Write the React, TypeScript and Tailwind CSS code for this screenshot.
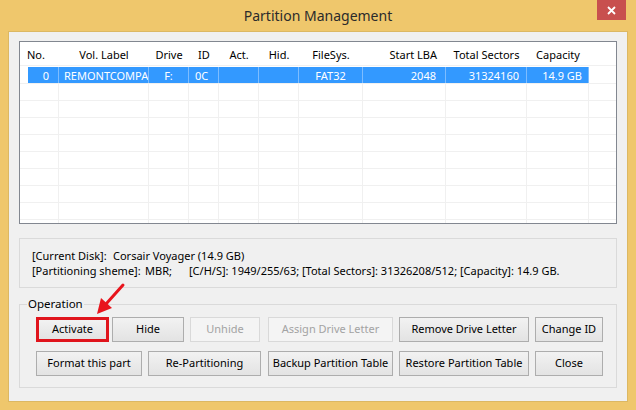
import React from "react";

const cols = [
  { w: 39, h: "No.", ha: "text-left pl-[7px]" },
  { w: 90, h: "Vol. Label", ha: "text-center" },
  { w: 40, h: "Drive", ha: "text-center" },
  { w: 30, h: "ID", ha: "text-center" },
  { w: 40, h: "Act.", ha: "text-center" },
  { w: 40, h: "Hid.", ha: "text-center" },
  { w: 64, h: "FileSys.", ha: "text-center" },
  { w: 83, h: "Start LBA", ha: "text-right pr-[9px]" },
  { w: 81, h: "Total Sectors", ha: "text-center" },
  { w: 62, h: "Capacity", ha: "text-center" },
];

const row0 = [
  { t: "0", a: "text-center pl-[6px]" },
  { t: "REMONTCOMPA", a: "text-left pl-[5px]" },
  { t: "F:", a: "text-center" },
  { t: "0C", a: "text-left pl-[6px]" },
  { t: "", a: "" },
  { t: "", a: "" },
  { t: "FAT32", a: "text-center" },
  { t: "2048", a: "text-right pr-[9px]" },
  { t: "31324160", a: "text-right pr-[7px]" },
  { t: "14.9 GB", a: "text-right pr-[6px]" },
];

function Btn({
  label,
  w,
  ml = 0,
  disabled,
  marked,
}: {
  label: string;
  w: number;
  ml?: number;
  disabled?: boolean;
  marked?: boolean;
}) {
  return (
    <div
      style={{ width: w, marginLeft: ml }}
      className={
        "h-[25px] flex items-center justify-center whitespace-nowrap text-[11px] " +
        (marked
          ? "border-[3px] border-[#e0141c] bg-gradient-to-b from-[#f2f2f2] to-[#e3e3e3] text-black"
          : disabled
          ? "border border-[#d9d9d9] bg-[#f4f4f4] text-[#a3a3a3]"
          : "border border-[#adadad] bg-gradient-to-b from-[#f2f2f2] to-[#e3e3e3] text-black")
      }
    >
      {label}
    </div>
  );
}

export default function App() {
  return (
    <div
      className="relative w-[636px] h-[410px] bg-[#efc76c] flex flex-col overflow-hidden"
      style={{ fontFamily: '"Segoe UI", "Noto Sans", sans-serif' }}
    >
      {/* title bar */}
      <div className="relative h-[31px] flex items-center justify-center shrink-0">
        <span className="text-[14px] text-[#2b2b2b]">Partition Management</span>
        <div className="absolute top-0 right-[10px] w-[29px] h-[20px] bg-[#c8504e] flex items-center justify-center">
          <svg width="9" height="9" viewBox="0 0 9 9">
            <path d="M1 1 L8 8 M8 1 L1 8" stroke="#fff" strokeWidth="1.8" />
          </svg>
        </div>
      </div>

      {/* client area */}
      <div className="mx-[8px] h-[371px] bg-[#f0f0f0] border border-[#dcb863] px-[10px] pt-[9px] flex flex-col text-[11px] text-black whitespace-nowrap">
        {/* list view */}
        <div className="h-[183px] bg-white border border-[#828790] overflow-hidden shrink-0">
          <div className="flex h-[24px] items-center pt-[3px] border-b border-[#f0f0f0]">
            {cols.map((c) => (
              <div key={c.h} style={{ width: c.w }} className={"shrink-0 " + c.ha}>
                {c.h}
              </div>
            ))}
          </div>
          <div className="h-[1px]" />
          {/* selected row */}
          <div className="flex h-[17px] border-b border-[#f0f0f0]">
            {row0.map((c, i) => (
              <div
                key={i}
                style={{ width: cols[i].w }}
                className={"shrink-0 h-full " + (i === 0 ? "pl-[8px]" : "")}
              >
                <div
                  className={
                    "h-full bg-[#3399ff] text-white leading-[17px] border-r border-[#7dbdff] overflow-hidden " +
                    c.a
                  }
                >
                  {c.t}
                </div>
              </div>
            ))}
            <div className="flex-1" />
          </div>
          {Array.from({ length: 9 }).map((_, r) => (
            <div key={r} className="flex h-[17px] border-b border-[#f0f0f0]">
              {cols.map((c, i) => (
                <div key={i} style={{ width: c.w }} className="shrink-0 h-full border-r border-[#f0f0f0]" />
              ))}
            </div>
          ))}
        </div>

        {/* disk info */}
        <div className="mt-[14px] h-[50px] border border-[#dadada] pl-[12px] pt-[9px] leading-[15px] shrink-0">
          <div className="flex">
            <span className="w-[81px]">[Current Disk]:</span>
            <span>Corsair Voyager (14.9 GB)</span>
          </div>
          <div className="flex">
            <span className="w-[113px]">[Partitioning sheme]:</span>
            <span className="w-[44px]">MBR;</span>
            <span>
              [C/H/S]: 1949/255/63; [Total Sectors]: 31326208/512; [Capacity]: 14.9 GB.
            </span>
          </div>
        </div>

        {/* operation group */}
        <div className="relative mt-[16px] h-[84px] border border-[#dadada] shrink-0">
          <span className="absolute -top-[9px] left-[7px] bg-[#f0f0f0] px-[1px] leading-[16px] text-[11.5px]">
            Operation
          </span>
          <div className="flex mt-[12px] ml-[16px]">
            <Btn label="Activate" w={73} marked />
            <Btn label="Hide" w={72} ml={3} />
            <Btn label="Unhide" w={70} ml={6} disabled />
            <Btn label="Assign Drive Letter" w={125} ml={8} disabled />
            <Btn label="Remove Drive Letter" w={130} ml={6} />
            <Btn label="Change ID" w={68} ml={6} />
          </div>
          <div className="flex mt-[9px] ml-[16px]">
            <Btn label="Format this part" w={106} />
            <Btn label="Re-Partitioning" w={113} ml={6} />
            <Btn label="Backup Partition Table" w={125} ml={7} />
            <Btn label="Restore Partition Table" w={130} ml={6} />
            <Btn label="Close" w={68} ml={6} />
          </div>
        </div>
      </div>

      {/* red arrow annotation */}
      <svg className="absolute left-[90px] top-[280px]" width="40" height="40" viewBox="0 0 40 40">
        <path d="M33 5 L16 24" stroke="#e8141c" strokeWidth="3" strokeLinecap="round" />
        <path d="M7 34 L11 18 L22 28 Z" fill="#e8141c" />
      </svg>
    </div>
  );
}
